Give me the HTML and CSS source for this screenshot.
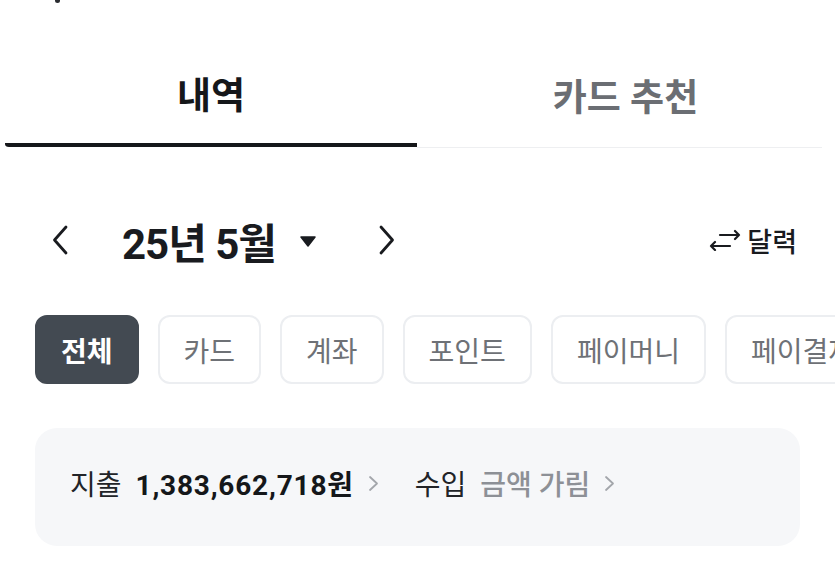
FILE: index.html
```html
<!DOCTYPE html>
<html lang="ko">
<head>
    <meta charset="UTF-8">
    <meta name="viewport" content="width=device-width, initial-scale=1.0">
    <title>내역</title>
    <link rel="stylesheet" href="styles.css">
</head>
<body>
    <div class="edge"><span class="edge-dot"></span></div>

    <nav class="tabs">
        <div class="tab tab-active">내역</div>
        <div class="tab tab-other">카드 추천</div>
    </nav>

    <div class="month-bar">
        <div class="month-nav">
            <button class="nav-btn" type="button" aria-label="이전 달">
                <svg width="16" height="30" viewBox="0 0 16 30"><path d="M14 2 L2.5 15 L14 28" fill="none" stroke="#191b1f" stroke-width="2.8" stroke-linecap="round" stroke-linejoin="round"/></svg>
            </button>
            <div class="month-title">
                <span>25년 5월</span>
                <svg class="caret" width="16" height="11" viewBox="0 0 16 11"><path d="M1 1 H15 L8 10 Z" fill="#191b1f" stroke="#191b1f" stroke-width="1.5" stroke-linejoin="round"/></svg>
            </div>
            <button class="nav-btn" type="button" aria-label="다음 달">
                <svg width="16" height="30" viewBox="0 0 16 30"><path d="M2 2 L13.5 15 L2 28" fill="none" stroke="#191b1f" stroke-width="2.8" stroke-linecap="round" stroke-linejoin="round"/></svg>
            </button>
        </div>
        <button class="calendar-toggle" type="button">
            <svg width="32" height="22" viewBox="0 0 32 22"><path d="M11 6 H30 M26 2 L30 6 L26 10 M2 17 H21 M6 13 L2 17 L6 21" fill="none" stroke="#191b1f" stroke-width="2.2" stroke-linecap="round" stroke-linejoin="round"/></svg>
            <span>달력</span>
        </button>
    </div>

    <div class="filters">
        <button class="chip chip-active" type="button">전체</button>
        <button class="chip" type="button">카드</button>
        <button class="chip" type="button">계좌</button>
        <button class="chip" type="button">포인트</button>
        <button class="chip" type="button">페이머니</button>
        <button class="chip" type="button">페이결제</button>
    </div>

    <div class="summary">
        <span class="summary-label">지출</span>
        <span class="summary-amount">1,383,662,718원</span>
        <svg class="summary-arrow" width="11" height="17" viewBox="0 0 11 17"><path d="M2 2 L9 8.5 L2 15" fill="none" stroke="#a3a6ab" stroke-width="1.8" stroke-linecap="round" stroke-linejoin="round"/></svg>
        <span class="summary-label summary-income">수입</span>
        <span class="summary-hidden">금액 가림</span>
        <svg class="summary-arrow" width="11" height="17" viewBox="0 0 11 17"><path d="M2 2 L9 8.5 L2 15" fill="none" stroke="#a3a6ab" stroke-width="1.8" stroke-linecap="round" stroke-linejoin="round"/></svg>
    </div>
</body>
</html>
```

FILE: styles.css
```css
/* history screen */
body {
    font-family: Roboto, "Noto Sans CJK KR", sans-serif;
    margin: 0;
    padding: 0;
    background-color: #fff;
    color: #191b1f;
    width: 835px;
    overflow: hidden;
}

button {
    font-family: inherit;
    background: none;
    border: none;
    padding: 0;
    margin: 0;
    cursor: pointer;
    color: inherit;
}

.edge {
    height: 4px;
}

.edge-dot {
    display: block;
    width: 5px;
    height: 3px;
    margin-left: 55px;
    background-color: #2a2c30;
    border-radius: 0 0 3px 3px;
}

/* tabs */
.tabs {
    display: flex;
    align-items: flex-start;
    padding-left: 5px;
}

.tab {
    display: flex;
    align-items: center;
    justify-content: center;
    box-sizing: border-box;
    font-size: 37px;
    font-weight: 700;
    padding-top: 38px;
}

.tab-active {
    width: 412px;
    height: 143px;
    border-bottom: 4px solid #15171a;
    border-bottom-left-radius: 4px 3px;
    color: #15171a;
}

.tab-other {
    width: 405px;
    height: 144px;
    padding-left: 12px;
    border-bottom: 1px solid #eeeff1;
    color: #6b6e73;
}

/* month selector */
.month-bar {
    display: flex;
    align-items: center;
    justify-content: space-between;
    height: 78px;
    margin-top: 53px;
    padding: 0 38px 0 52px;
}

.month-nav {
    display: flex;
    align-items: center;
}

.nav-btn {
    display: flex;
    align-items: center;
}

.month-title {
    display: flex;
    align-items: center;
    gap: 24px;
    margin: 0 63px 0 54px;
    font-size: 42px;
    font-weight: 700;
    letter-spacing: -1px;
}

.caret {
    margin-top: 2px;
}

.calendar-toggle {
    display: flex;
    align-items: center;
    gap: 6px;
    font-size: 27px;
    font-weight: 500;
}

/* filter chips */
.filters {
    display: flex;
    gap: 19px;
    margin-top: 36px;
    padding-left: 35px;
    white-space: nowrap;
}

.chip {
    flex-shrink: 0;
    height: 69px;
    padding: 0 24px;
    border: 2px solid #eceef1;
    border-radius: 12px;
    font-size: 28px;
    color: #6e7176;
}

.chip-active {
    background-color: #434a52;
    border-color: #434a52;
    color: #fff;
    font-weight: 700;
}

/* totals */
.summary {
    display: flex;
    align-items: center;
    box-sizing: border-box;
    width: 765px;
    height: 118px;
    margin: 44px 0 0 35px;
    padding: 0 0 8px 35px;
    background-color: #f6f7f9;
    border-radius: 22px;
    font-size: 28px;
}

.summary-label {
    margin-right: 14px;
    color: #222428;
}

.summary-amount {
    font-weight: 700;
    letter-spacing: 0.8px;
    color: #15171a;
}

.summary-arrow {
    margin-left: 14px;
}

.summary-income {
    margin-left: 36px;
}

.summary-hidden {
    color: #8d9096;
    font-weight: 500;
}
```
